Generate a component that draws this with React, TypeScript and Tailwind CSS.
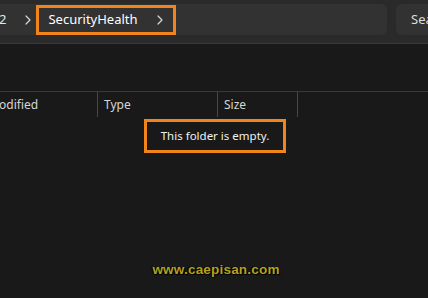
import React from 'react';

function Chevron() {
  return (
    <svg width="6" height="10" viewBox="0 0 6 10" className="shrink-0">
      <path d="M1 1 L5 5 L1 9" fill="none" stroke="#d8d8d8" strokeWidth="1.2" strokeLinecap="round" strokeLinejoin="round" />
    </svg>
  );
}

export default function App() {
  return (
    <div
      className="w-[428px] h-[298px] bg-[#191919] overflow-hidden flex flex-col text-[#e6e6e6]"
      style={{ fontFamily: '"Noto Sans", "Open Sans", sans-serif' }}
    >
      {/* toolbar with address + search */}
      <div className="h-[44px] shrink-0 bg-[#2a2a2a] border-b border-[#3a3a3a] flex items-start pt-[4px] gap-[9px]">
        <div className="w-[387px] h-[31px] bg-[#323232] rounded-r-md flex items-center shrink-0">
          <span className="text-[13px] ml-[-1px] text-[#e6e6e6]">2</span>
          <span className="ml-[19px] mr-[5px] flex items-center">
            <Chevron />
          </span>
          <div className="h-[30px] mt-[1px] w-[140px] border-[3px] border-[#f2841c] flex items-center pl-[9px]">
            <span className="text-[13px] text-white">SecurityHealth</span>
            <span className="ml-[19px] flex items-center">
              <Chevron />
            </span>
          </div>
        </div>
        <div className="flex-1 h-[31px] bg-[#323232] rounded-l-md flex items-center pl-[15px] overflow-hidden">
          <span className="text-[13px] text-[#dcdcdc] whitespace-nowrap">Sea</span>
        </div>
      </div>

      {/* column headers */}
      <div className="mt-[47px] border-t border-[#3a3a3a] h-[26px] flex text-[12px] text-[#d6d6d6] shrink-0">
        <div className="w-[98px] border-r border-[#474747] flex items-center">
          <span className="ml-[-1px]">odified</span>
        </div>
        <div className="w-[120px] border-r border-[#474747] flex items-center pl-[6px]">Type</div>
        <div className="w-[80px] border-r border-[#474747] flex items-center pl-[6px]">Size</div>
      </div>

      {/* empty message */}
      <div className="flex justify-start pl-[144px] mt-[2px]">
        <div className="w-[142px] h-[34px] border-[3px] border-[#f2841c] flex items-center justify-center text-[11.5px] text-[#f0f0f0]">
          This folder is empty.
        </div>
      </div>

      {/* watermark */}
      <div className="mt-[107px] flex justify-center pl-[4px]">
        <span
          className="text-[13.5px] font-bold text-[#b3a21e] tracking-[0.2px]"
          style={{ fontFamily: '"Liberation Sans", Arial, sans-serif', textShadow: '1px 1px 1px #000, -1px 0 1px #000' }}
        >
          www.caepisan.com
        </span>
      </div>
    </div>
  );
}
